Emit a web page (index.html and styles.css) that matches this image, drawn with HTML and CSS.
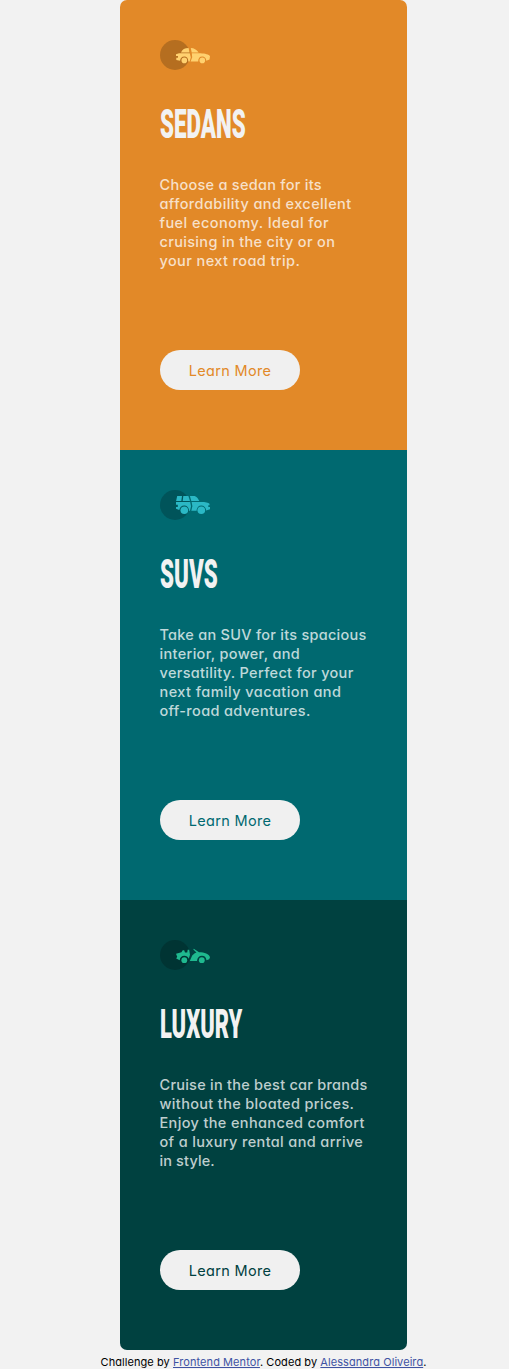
FILE: index.html
```html
<!DOCTYPE html>
<html lang="en">
<head>
<meta charset="utf-8">
<title>3-column preview card</title>
<link rel="stylesheet" href="styles.css">
</head>
<body>
<main class="cards">
  <section class="card sedans">
    <svg class="icon" viewBox="0 0 50 30">
      <circle class="disc" cx="15" cy="15" r="15"/>
      <g class="car">
        <path d="M21 12.4C22.3 9.4 24.6 8 28.6 8L29.6 12.4ZM30.8 8C34.2 8 36.3 9.7 38.7 12.4H31.7Z"/>
        <path d="M16 14.3L19 13.2H29.8L30.8 17.4L29.6 21.5H28.3C28.3 18.5 26.8 16.6 24.3 16.6C21.8 16.6 20.3 18.2 20.1 20.8L16.3 20V17.8H18V16H16Z"/>
        <path d="M31.8 13.2H40.5C45 13.5 49 14.4 50 16.2L49.5 19.4L46.3 20.8C46.2 18.2 44.6 16.6 42.3 16.6C39.6 16.6 38.2 18.5 38.2 21.5H30.6L32.2 17.3Z"/>
        <circle cx="24.3" cy="20.4" r="2.8"/><circle cx="42.3" cy="20.4" r="2.8"/>
      </g>
    </svg>
    <h1 class="title"><span class="condensed">SEDANS</span></h1>
    <p class="text">
      <span class="line s1">Choose a sedan for its</span>
      <span class="line s2">affordability and excellent</span>
      <span class="line s3">fuel economy. Ideal for</span>
      <span class="line s4">cruising in the city or on</span>
      <span class="line s5">your next road trip.</span>
    </p>
    <button class="button">Learn More</button>
  </section>
  <section class="card suvs">
    <svg class="icon" viewBox="0 0 50 30">
      <circle class="disc" cx="15" cy="15" r="15"/>
      <g class="car">
        <path d="M17.2 6H22L21.3 11H16.1ZM23.3 6H28.4L30 11H22.7ZM29.9 6H34.6C36.8 6.5 38 8.4 39.3 11H31.3Z"/>
        <path d="M16 12H30.2L31 16.2L30 20.8H29C28.8 17.5 27 15.5 24.3 15.5C21.6 15.5 19.8 17.3 19.3 20L16 18.8V17H17.8V14.8H16Z"/>
        <path d="M31.6 12H41C45.5 12 48.5 12.5 49.5 13.7V15.3H48.3V17H50V19.2L46.2 20.4C45.7 17.2 44 15.5 41.3 15.5C38.4 15.5 36.7 17.6 36.6 20.8H31.3L32.4 16.2Z"/>
        <circle cx="24.3" cy="20.3" r="3.8"/><circle cx="41.3" cy="20.3" r="3.8"/>
      </g>
    </svg>
    <h1 class="title"><span class="condensed">SUVS</span></h1>
    <p class="text">
      <span class="line u1">Take an SUV for its spacious</span>
      <span class="line u2">interior, power, and</span>
      <span class="line u3">versatility. Perfect for your</span>
      <span class="line u4">next family vacation and</span>
      <span class="line u5">off-road adventures.</span>
    </p>
    <button class="button">Learn More</button>
  </section>
  <section class="card luxury">
    <svg class="icon" viewBox="0 0 50 30">
      <circle class="disc" cx="15" cy="15" r="15"/>
      <g class="car">
        <path d="M16 13.7L21.5 12.2L22.7 10.2H24.2L25 12.6H27.2L27.7 9.7H29.2L30 14.8L28.8 18.7C28 16.8 26.5 15.8 24.3 15.8C21.7 15.8 20 17.4 19.7 20.3L16.2 18.6L17.2 16.8Z"/>
        <path d="M33.8 8.7L39 12.2C44.6 12.2 49 14 50 17.2L49.2 19.3L46.5 20.2C46 17.3 44.5 15.8 42 15.8C39 15.8 37.3 17.8 37 21.1H29.8L32.2 15.6C33.2 14.1 34.8 12.9 36.5 12.4L33.3 9.4Z"/>
        <circle cx="24.3" cy="20.2" r="2.9"/><circle cx="41.8" cy="20.2" r="2.9"/>
      </g>
    </svg>
    <h1 class="title"><span class="condensed">LUXURY</span></h1>
    <p class="text">
      <span class="line l1">Cruise in the best car brands</span>
      <span class="line l2">without the bloated prices.</span>
      <span class="line l3">Enjoy the enhanced comfort</span>
      <span class="line l4">of a luxury rental and arrive</span>
      <span class="line l5">in style.</span>
    </p>
    <button class="button">Learn More</button>
  </section>
</main>
<footer class="attribution">Challenge by <a href="#">Frontend Mentor</a>. Coded by <a href="#">Alessandra Oliveira</a>.</footer>
</body>
</html>
```
FILE: styles.css
```css
* { box-sizing: border-box; }
body {
  margin: 0;
  padding-left: 18px;
  background: #f2f2f2;
  font-family: Inter, "Open Sans", sans-serif;
  font-feature-settings: "cv11" 1;
}
.cards {
  width: 287px;
  margin: 0 auto;
  border-radius: 7px;
  overflow: hidden;
}
.card {
  height: 450px;
  padding: 40px;
  display: flex;
  flex-direction: column;
  align-items: flex-start;
}
.sedans { background: #e28928; color: #e28928; --disc: #b56e20; --car: #ffd16f; }
.suvs { background: #006970; color: #006970; --disc: #00545a; --car: #2bb8c5; }
.luxury { background: #004140; color: #004140; --disc: #003433; --car: #1fb98f; }
.icon { width: 50px; height: 30px; }
.disc { fill: var(--disc); }
.car { fill: var(--car); }
.title {
  margin: 31px 0 0;
  height: 48px;
  font: 900 40px/48px Roboto, sans-serif;
  color: #f2f2f2;
}
.condensed {
  display: inline-block;
  transform: scaleX(.56);
  transform-origin: left;
}
.luxury .condensed { transform: scaleX(.548); }
.text {
  margin: 26px 0 0 -0.5px;
  font-size: 14.5px;
  line-height: 19px;
  color: rgba(255, 255, 255, .75);
  font-weight: 500;
}
.line { display: block; width: max-content; }
.s1 { letter-spacing: .27px; }
.s2 { letter-spacing: .4px; }
.s3 { letter-spacing: .45px; }
.s4 { letter-spacing: .34px; }
.s5 { letter-spacing: .4px; }
.u1 { letter-spacing: .26px; }
.u2 { letter-spacing: .33px; }
.u3 { letter-spacing: .32px; }
.u4 { letter-spacing: .43px; }
.u5 { letter-spacing: .34px; }
.l1 { letter-spacing: .25px; }
.l2 { letter-spacing: .34px; }
.l3 { letter-spacing: .36px; }
.l4 { letter-spacing: .36px; }
.l5 { letter-spacing: .12px; }
.button {
  width: 140px;
  height: 40px;
  margin-top: 80px;
  padding: 2px 0 0;
  border: 0;
  border-radius: 20px;
  background: #f0f0f0;
  color: inherit;
  font: 400 14.5px/38px Inter, sans-serif;
  font-feature-settings: inherit;
  letter-spacing: .32px;
}
.attribution {
  margin-top: 5px;
  height: 14px;
  font-size: 11px;
  line-height: 14px;
  letter-spacing: .07px;
  text-align: center;
  white-space: nowrap;
  color: #000;
}
.attribution a { color: #3e52a3; }
```
